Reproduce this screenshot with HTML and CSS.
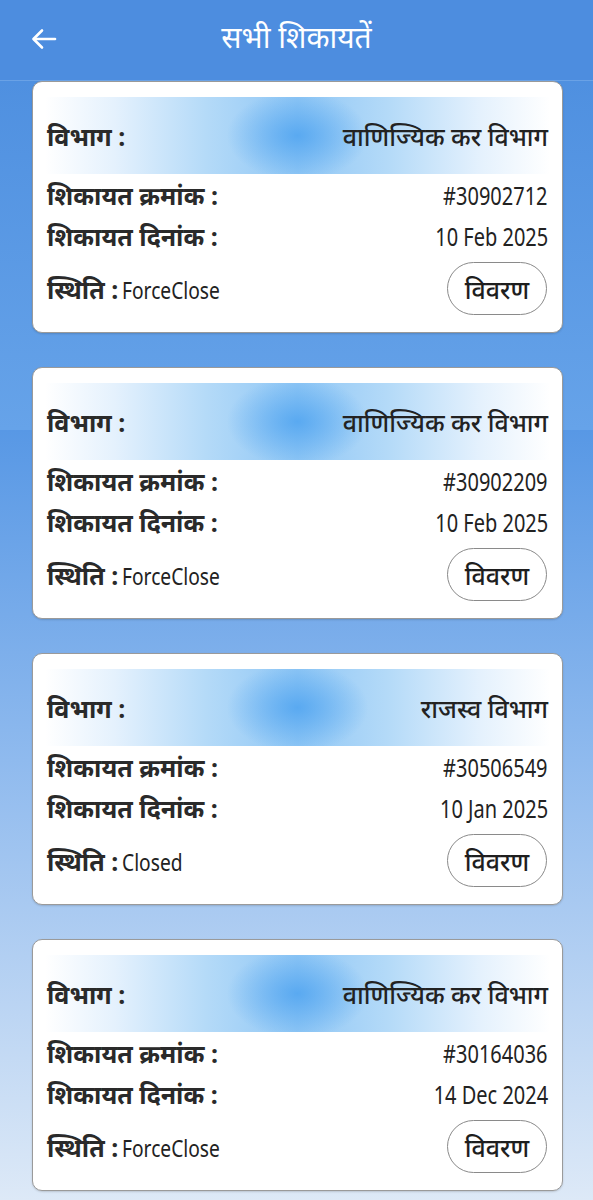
FILE: index.html
```html
<!DOCTYPE html>
<html lang="hi">
<head>
<meta charset="utf-8">
<title>सभी शिकायतें</title>
<link rel="stylesheet" href="styles.css">
</head>
<body>
<header class="topbar">
  <button class="back" aria-label="back">
    <svg width="26" height="22" viewBox="0 0 26 22" fill="none" stroke="#fff" stroke-width="2.6" stroke-linecap="round" stroke-linejoin="round"><path d="M24 11H3"/><path d="M11 2.5L2.5 11L11 19.5"/></svg>
  </button>
  <h1 class="title">सभी शिकायतें</h1>
</header>
<main class="list">
  <section class="card">
    <div class="head"><span class="lbl">विभाग :</span><span class="val">वाणिज्यिक कर विभाग</span></div>
    <div class="row"><span class="lbl">शिकायत क्रमांक :</span><span class="lat">#30902712</span></div>
    <div class="row"><span class="lbl">शिकायत दिनांक :</span><span class="lat">10 Feb 2025</span></div>
    <div class="status"><span><span class="lbl">स्थिति :</span> <span class="lat st">ForceClose</span></span><button class="btn">विवरण</button></div>
  </section>
  <section class="card">
    <div class="head"><span class="lbl">विभाग :</span><span class="val">वाणिज्यिक कर विभाग</span></div>
    <div class="row"><span class="lbl">शिकायत क्रमांक :</span><span class="lat">#30902209</span></div>
    <div class="row"><span class="lbl">शिकायत दिनांक :</span><span class="lat">10 Feb 2025</span></div>
    <div class="status"><span><span class="lbl">स्थिति :</span> <span class="lat st">ForceClose</span></span><button class="btn">विवरण</button></div>
  </section>
  <section class="card">
    <div class="head"><span class="lbl">विभाग :</span><span class="val">राजस्व विभाग</span></div>
    <div class="row"><span class="lbl">शिकायत क्रमांक :</span><span class="lat">#30506549</span></div>
    <div class="row"><span class="lbl">शिकायत दिनांक :</span><span class="lat">10 Jan 2025</span></div>
    <div class="status"><span><span class="lbl">स्थिति :</span> <span class="lat st">Closed</span></span><button class="btn">विवरण</button></div>
  </section>
  <section class="card">
    <div class="head"><span class="lbl">विभाग :</span><span class="val">वाणिज्यिक कर विभाग</span></div>
    <div class="row"><span class="lbl">शिकायत क्रमांक :</span><span class="lat">#30164036</span></div>
    <div class="row"><span class="lbl">शिकायत दिनांक :</span><span class="lat">14 Dec 2024</span></div>
    <div class="status"><span><span class="lbl">स्थिति :</span> <span class="lat st">ForceClose</span></span><button class="btn">विवरण</button></div>
  </section>
</main>
</body>
</html>
```
FILE: styles.css
```css
* { box-sizing: border-box; }
html, body {
  margin: 0;
  padding: 0;
}
body {
  font-family: "Noto Sans", "Noto Sans Devanagari", "Lohit Devanagari", sans-serif;
  color: #222;
  min-height: 1200px;
  background: linear-gradient(to bottom, #4d8ddf 0px, #4f90e0 81px, #66a3e9 430px, #5898e5 430px, #8fbaee 760px, #dde9f7 1200px) no-repeat;
  background-size: 100% 1200px;
  overflow: hidden;
}
.topbar {
  height: 81px;
  background: #4d8ddf;
  border-bottom: 1px solid #6aa2e6;
  display: flex;
  align-items: center;
  position: relative;
}
.back {
  background: none;
  border: 0;
  padding: 0;
  margin: 0 0 2px 31px;
  width: 26px;
  height: 22px;
  display: flex;
}
.title {
  position: absolute;
  left: 0;
  right: 0;
  top: 16px;
  margin: 0;
  text-align: center;
  color: #fff;
  font-size: 30px;
  font-weight: 400;
  line-height: 42px;
  pointer-events: none;
}
.list {
  display: flex;
  flex-direction: column;
  gap: 34px;
  padding: 0 30px 0 32px;
}
.card {
  background: #fff;
  border: 1px solid #9a9a9a;
  border-radius: 10px;
  padding: 15px 14px 17px 14px;
  box-shadow: 0 1px 2px rgba(0,0,0,0.15);
}
.head, .row, .status {
  display: flex;
  justify-content: space-between;
  align-items: center;
}
.head {
  height: 77px;
  margin: 0 -2px;
  padding: 0 2px;
  background:
    radial-gradient(ellipse 14% 58% at 50% 50%, rgba(80,164,240,0.85), rgba(80,164,240,0) 100%),
    linear-gradient(to right, #ffffff 0%, #e4f1fd 14%, #b4daf8 32%, #90c7f5 50%, #b4daf8 68%, #e4f1fd 86%, #ffffff 100%);
}
.row { height: 41px; }
.status {
  height: 53px;
  margin-top: 6px;
}
.lbl {
  font-weight: 700;
  font-size: 25px;
  color: #2a2a2a;
}
.val {
  font-size: 25px;
  font-weight: 500;
  color: #222;
}
.lat {
  display: inline-block;
  font-size: 25px;
  font-weight: 400;
  color: #222;
  transform: scaleX(0.8);
  transform-origin: right center;
}
.st {
  font-size: 24px;
  transform-origin: left center;
}
.btn {
  width: 100px;
  height: 53px;
  border: 1.5px solid #8a8a8a;
  border-radius: 27px;
  background: #fff;
  font-family: inherit;
  font-size: 25px;
  font-weight: 500;
  color: #1e1e1e;
  padding: 0;
  margin-right: 1px;
}
```
